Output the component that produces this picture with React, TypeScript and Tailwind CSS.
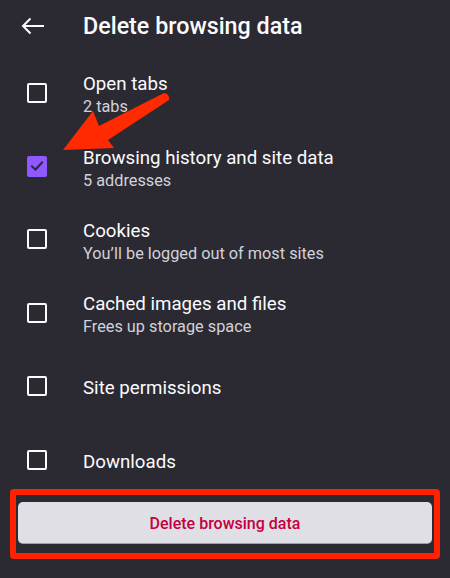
import React from "react";

type Item = { title: string; sub?: string; checked?: boolean };

const items: Item[] = [
  { title: "Open tabs", sub: "2 tabs" },
  { title: "Browsing history and site data", sub: "5 addresses", checked: true },
  { title: "Cookies", sub: "You\u2019ll be logged out of most sites" },
  { title: "Cached images and files", sub: "Frees up storage space" },
  { title: "Site permissions" },
  { title: "Downloads" },
];

function Box({ checked }: { checked?: boolean }) {
  if (checked) {
    return (
      <div className="w-[20px] h-[21px] rounded-[2px] bg-[#9059ff] flex items-center justify-center">
        <svg width="14" height="12" viewBox="0 0 14 12">
          <path d="M2 6.5 L5.5 9.5 L12 2.5" fill="none" stroke="#2b2a33" strokeWidth="2" strokeLinecap="square" />
        </svg>
      </div>
    );
  }
  return <div className="w-[20px] h-[20px] rounded-[2px] border-2 border-[#fbfbfe]" />;
}

export default function App() {
  return (
    <div
      className="relative w-[450px] h-[578px] bg-[#2b2a33] overflow-hidden text-[#fbfbfe]"
      style={{ fontFamily: "Roboto, 'Noto Sans', sans-serif" }}
    >
      <div className="h-[56px] flex items-center">
        <div className="w-[83px] pl-[21px] flex items-center pb-[5px]">
          <svg width="24" height="18" viewBox="0 0 24 18">
            <path d="M23 9 H2 M9.5 1.5 L2 9 L9.5 16.5" fill="none" stroke="#fbfbfe" strokeWidth="2" />
          </svg>
        </div>
        <div className="text-[23.3px] font-medium leading-none pb-[3px]">Delete browsing data</div>
      </div>

      <div className="flex flex-col">
        {items.map((it) => (
          <div key={it.title} className="h-[73.4px] flex items-center">
            <div className="w-[83px] pl-[27px] shrink-0">
              <Box checked={it.checked} />
            </div>
            <div className="flex flex-col pt-[4px]">
              <div className="text-[18.7px] leading-[24px]">{it.title}</div>
              {it.sub && <div className="text-[16.3px] leading-[21px] text-[#d2d1da]">{it.sub}</div>}
            </div>
          </div>
        ))}
      </div>

      <div className="px-[18px] mt-[6px]">
        <div className="h-[42px] pt-[2px] rounded-[5px] bg-[#e0dfe6] border-b border-[#9f9ea8] flex items-center justify-center text-[#c5003e] text-[16px] font-medium">
          Delete browsing data
        </div>
      </div>

      <div className="absolute left-[10px] top-[489px] w-[430px] h-[70px] border-[6px] border-[#ff2200] rounded-[4px]" />

      <svg className="absolute left-0 top-0" width="450" height="578" viewBox="0 0 450 578">
        <path
          d="M63 150 L93 111 L99 126 L164 93 Q170 94 169 100 L108 140 L114 148 Z"
          fill="#ff2a00"
          strokeLinejoin="round"
        />
      </svg>
    </div>
  );
}
